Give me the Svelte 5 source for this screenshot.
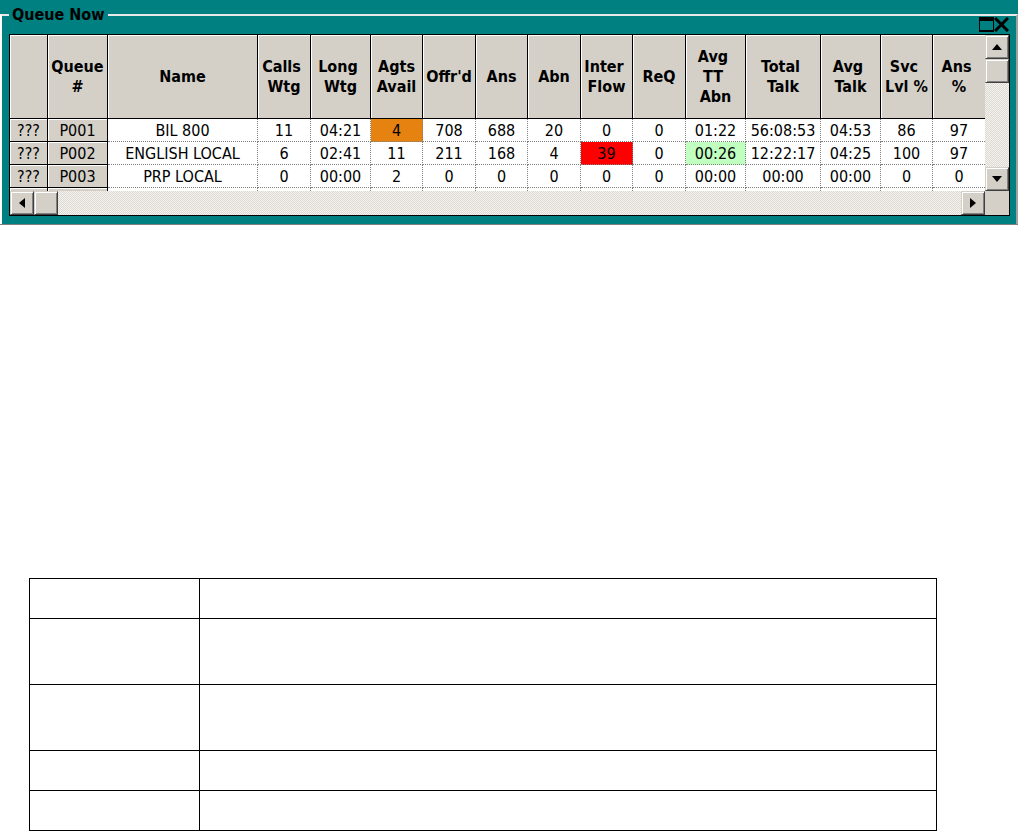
<script>
  const columns = [
    { label: '', width: 38, fixed: true },
    { label: 'Queue\n#', width: 60, fixed: true },
    { label: 'Name', width: 150 },
    { label: 'Calls \nWtg', width: 53 },
    { label: 'Long \nWtg', width: 60 },
    { label: 'Agts\nAvail', width: 52 },
    { label: "Offr'd", width: 53 },
    { label: 'Ans', width: 52 },
    { label: 'Abn', width: 53 },
    { label: 'Inter \nFlow', width: 52 },
    { label: 'ReQ', width: 53 },
    { label: 'Avg \nTT \nAbn', width: 60 },
    { label: 'Total \nTalk', width: 75 },
    { label: 'Avg \nTalk', width: 60 },
    { label: 'Svc \nLvl %', width: 52 },
    { label: 'Ans \n%', width: 52 }
  ];

  const queues = [
    ['???', 'P001', 'BIL 800', '11', '04:21', '4', '708', '688', '20', '0', '0', '01:22', '56:08:53', '04:53', '86', '97'],
    ['???', 'P002', 'ENGLISH LOCAL', '6', '02:41', '11', '211', '168', '4', '39', '0', '00:26', '12:22:17', '04:25', '100', '97'],
    ['???', 'P003', 'PRP LOCAL', '0', '00:00', '2', '0', '0', '0', '0', '0', '00:00', '00:00', '00:00', '0', '0']
  ];

  // threshold colours, keyed by row-column
  const alerts = {
    '0-5': 'warning',
    '1-9': 'critical',
    '1-11': 'good'
  };

  const noteRows = ['short', 'tall', 'tall', 'short', 'short'];
</script>

<section class="panel">
  <fieldset>
    <legend>Queue Now</legend>
    <div class="grid">
      <div class="view">
        <table class="queues">
          <colgroup>
            {#each columns as c}
            <col style="width: {c.width}px" />
            {/each}
          </colgroup>
          <thead>
            <tr>
              {#each columns as c}
              <th scope="col">{c.label}</th>
              {/each}
            </tr>
          </thead>
          <tbody>
            {#each queues as row, r}
            <tr>
              {#each row as value, i}
              <td class={columns[i].fixed ? 'fixed' : alerts[`${r}-${i}`]}>{value}</td>
              {/each}
            </tr>
            {/each}
            <tr class="cut">
              {#each columns as c}
              <td class:fixed={c.fixed}></td>
              {/each}
            </tr>
          </tbody>
        </table>
      </div>
      <div class="bar vertical">
        <button aria-label="Scroll up"><svg width="10" height="6" viewBox="0 0 10 6"><path d="M5 0 L10 6 H0 Z" /></svg></button>
        <button aria-label="Vertical position"></button>
        <span class="track"></span>
        <button aria-label="Scroll down"><svg width="10" height="6" viewBox="0 0 10 6"><path d="M0 0 H10 L5 6 Z" /></svg></button>
      </div>
      <div class="bar horizontal">
        <button aria-label="Scroll left"><svg width="6" height="10" viewBox="0 0 6 10"><path d="M6 0 V10 L0 5 Z" /></svg></button>
        <button aria-label="Horizontal position"></button>
        <span class="track"></span>
        <button aria-label="Scroll right"><svg width="6" height="10" viewBox="0 0 6 10"><path d="M0 0 L6 5 L0 10 Z" /></svg></button>
      </div>
    </div>
  </fieldset>
  <div class="controls">
    <button aria-label="Maximize">
      <svg width="15" height="15" viewBox="0 0 15 15"><path d="M0 0 H15 V15 H0 Z M1 4 V13 H14 V4 Z" fill-rule="evenodd" /></svg>
    </button>
    <button aria-label="Close">
      <svg width="15" height="15" viewBox="0 0 15 15"><path d="M1 1 L14 14 M14 1 L1 14" fill="none" stroke="#000" stroke-width="3" /></svg>
    </button>
  </div>
</section>

<table class="notes">
  <tbody>
    {#each noteRows as size}
    <tr class={size}>
      <td class="key"></td>
      <td></td>
    </tr>
    {/each}
  </tbody>
</table>

<style>
  :global(body) {
    margin: 0;
    background: #fff;
  }

  .panel {
    position: relative;
    box-sizing: border-box;
    padding-top: 5px;
    border-bottom: 1px solid #808080;
    background: #008080;
    font: 16px/19px "DejaVu Sans Condensed", "DejaVu Sans", sans-serif;
    color: #000;
  }

  fieldset {
    min-width: 0;
    margin: 0;
    padding: 10px 6px 8px 7px;
    border: 2px solid #fff;
    border-top-color: #e8e8e8;
    border-right-color: #a0a0a0;
    border-bottom: 0;
  }

  legend {
    padding: 0 3px;
    font-weight: bold;
  }

  .grid {
    display: grid;
    grid-template-columns: minmax(0, 1fr) 24px;
    grid-template-rows: auto 24px;
    border: 1px solid #000;
    background: #d4d0c8;
  }

  .view {
    overflow: hidden;
    background: #fff;
  }

  .queues {
    width: 100%;
    table-layout: fixed;
    border-collapse: separate;
    border-spacing: 0;
  }

  th,
  .queues td {
    box-sizing: border-box;
    padding: 0;
    text-align: center;
    white-space: pre;
  }

  th {
    height: 84px;
    border-right: 1px solid #000;
    border-bottom: 1px solid #000;
    background: #d4d0c8;
    box-shadow: inset 1px 1px #fff;
    line-height: 20px;
    vertical-align: middle;
  }

  th:last-child {
    border-right: 0;
  }

  .queues td {
    height: 23px;
    border-right: 1px dotted #808080;
    border-bottom: 1px dotted #808080;
  }

  .queues td:last-child {
    border-right: 0;
  }

  .queues td.fixed {
    border-right: 1px solid #000;
    border-bottom: 1px solid #000;
    background: #d4d0c8;
    box-shadow: inset 1px 1px #fff;
  }

  .queues .cut td {
    height: 3px;
    border-bottom: 0;
  }

  .queues td.warning {
    background: #e6820f;
  }

  .queues td.critical {
    background: #f00;
  }

  .queues td.good {
    background: #c0ffc0;
  }

  .bar {
    display: flex;
    background: repeating-conic-gradient(#dddad4 0 25%, #f3f2ef 0 50%) 0 0 / 2px 2px;
  }

  .vertical {
    flex-direction: column;
  }

  .track {
    flex: 1;
  }

  .bar button {
    display: flex;
    flex: none;
    align-items: center;
    justify-content: center;
    box-sizing: border-box;
    width: 24px;
    height: 24px;
    padding: 0;
    border: 1px solid;
    border-color: #d4d0c8 #404040 #404040 #d4d0c8;
    background: #d4d0c8;
    box-shadow: inset 1px 1px #fff, inset -1px -1px #808080;
  }

  .controls {
    position: absolute;
    top: 17px;
    right: 9px;
    display: flex;
  }

  .controls button {
    display: block;
    padding: 0;
    border: 0;
    background: none;
  }

  .controls svg {
    display: block;
  }

  .notes {
    width: calc(100% - 110px);
    margin: 353px 81px 0 29px;
    border-collapse: collapse;
  }

  .notes td {
    padding: 0;
    border: 1px solid #000;
  }

  .key {
    width: 169px;
  }

  .short {
    height: 40px;
  }

  .tall {
    height: 66px;
  }
</style>
